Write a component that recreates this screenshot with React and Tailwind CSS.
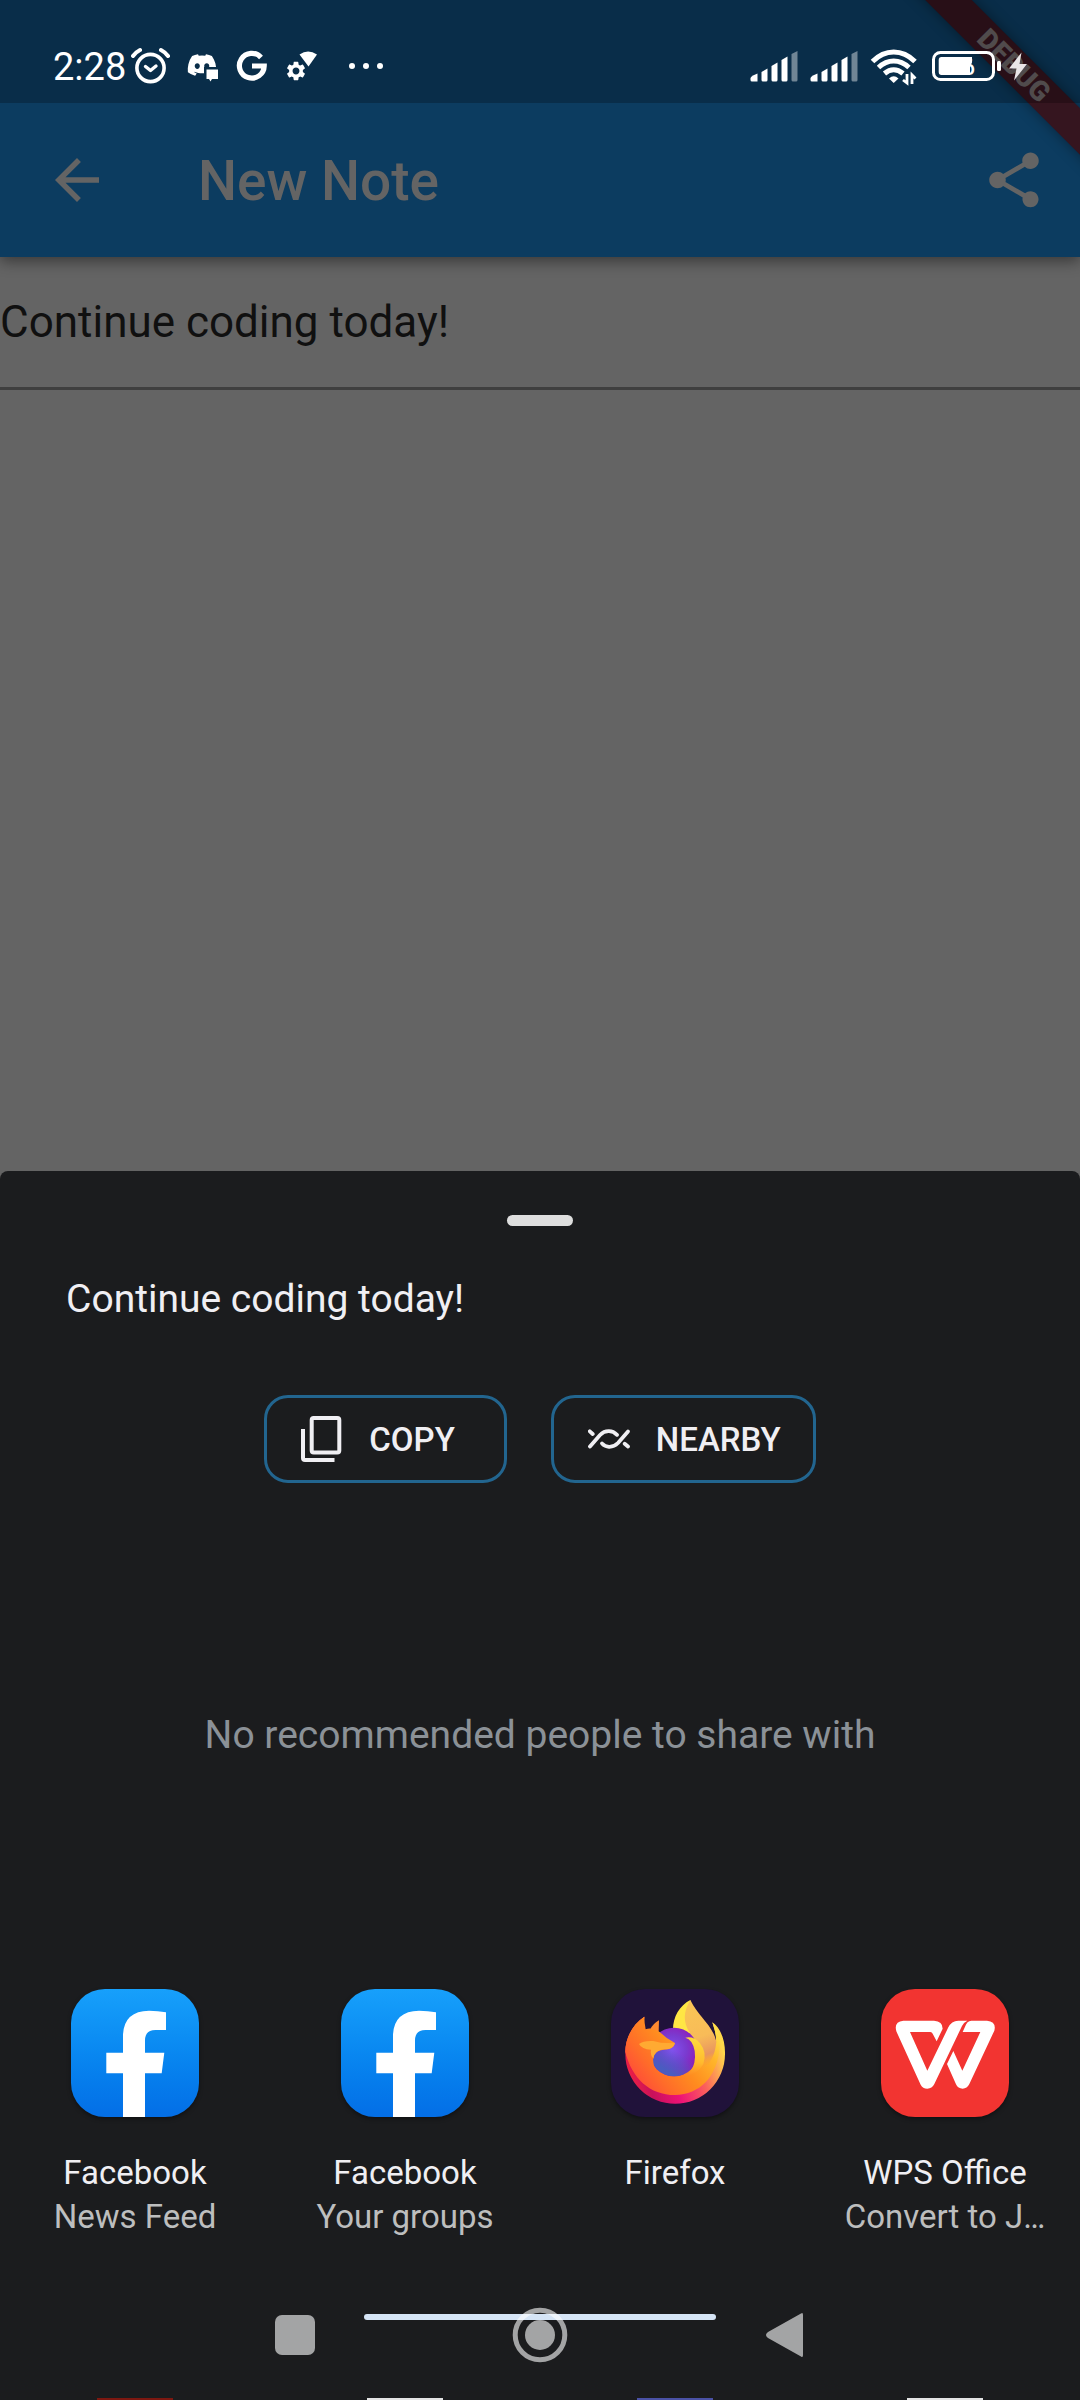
import React from "react";
import { MdArrowBack, MdShare, MdSettings } from "react-icons/md";
import { FaDiscord } from "react-icons/fa";

function AlarmIcon() {
  return (
    <svg className="h-10 w-10" viewBox="132 47 40 40" fill="none" stroke="#fff" strokeLinecap="round">
      <circle cx="152.500" cy="68" r="13.600" strokeWidth="3.600" />
      <path d="M135 56Q138 52 142 50M163 50Q167 52 170 56" strokeWidth="4" />
      <path d="M147.500 66.500L152.500 70.500L158 66" strokeWidth="3.400" strokeLinejoin="round" />
    </svg>
  );
}

function DiscordIcon() {
  return (
    <svg className="h-10 w-[34px]" viewBox="188 47 34 40" fill="#fff">
      <FaDiscord x="188.500" y="49.500" size="31" color="#fff" />
      <rect x="206" y="67" width="16" height="15" fill="#092e49" />
      <path d="M208.500 69.500H220V79H214L212.500 81.500L211 79H208.500Z" />
    </svg>
  );
}

function GoogleIcon() {
  return (
    <svg className="h-10 w-8" viewBox="238 47 32 40" fill="none" stroke="#fff" strokeWidth="5.200">
      <path d="M263 57.400A12.400 12.400 0 1 0 266.200 66H254" />
    </svg>
  );
}

function GearSignalIcon() {
  return (
    <svg className="h-10 w-[34px]" viewBox="286 47 34 40" fill="#fff">
      <MdSettings x="286.500" y="59.500" size="23" color="#fff" />
      <path d="M301.500 54.500Q310 48.500 319 54.500L310.500 66.500Z" />
    </svg>
  );
}

function MoreDots() {
  return (
    <svg className="h-10 w-9" viewBox="350 47 36 40" fill="#fff">
      <circle cx="354" cy="66" r="3" />
      <circle cx="368" cy="66" r="3" />
      <circle cx="382" cy="66" r="3" />
    </svg>
  );
}

function SignalIcon() {
  return (
    <svg className="h-10 w-12" viewBox="750 47 48 40" fill="#fff">
      <path d="M750.500 80V78Q751 76.500 753 75.500L757.500 73.500V81.500H752Q750.500 81.500 750.500 80Z" />
      <path d="M761.500 80V72L767.500 68.500V80Q767.500 81.500 766 81.500H763Q761.500 81.500 761.500 80Z" />
      <path d="M771.500 80V66L777.500 62.500V80Q777.500 81.500 776 81.500H773Q771.500 81.500 771.500 80Z" />
      <path d="M781.500 80V60L787.500 56.500V80Q787.500 81.500 786 81.500H783Q781.500 81.500 781.500 80Z" />
      <path d="M791.500 80V54L797.500 51V80Q797.500 81.500 796 81.500H793Q791.500 81.500 791.500 80Z" opacity="0.42" />
    </svg>
  );
}

function WifiIcon() {
  return (
    <svg className="h-10 w-12" viewBox="870 47 48 40" fill="none" stroke="#fff" strokeWidth="5">
      <path d="M872.500 61.500Q882 52 893.700 52T915 61.500" />
      <path d="M878.500 67.500Q885.500 61 893.700 61T909 67.500" />
      <path d="M884.500 73.500Q889 69.700 893.700 69.700T903 73.500" />
      <path d="M889 78.500Q893.700 74 898.500 78.500L893.700 83Z" fill="#fff" stroke="none" />
      <path d="M907 74V83L903 80M912 84V75L915.500 78.500" strokeWidth="2.800" />
    </svg>
  );
}

function BatteryIcon() {
  return (
    <svg className="h-10 w-[70px]" viewBox="932 47 70 40" fill="#fff">
      <rect x="933.500" y="52.500" width="60" height="27" rx="7" fill="none" stroke="#fff" strokeWidth="3" />
      <text x="950" y="75" fontFamily="Roboto, sans-serif" fontSize="22" fontWeight="500">56</text>
      <path d="M941.500 57H972V62.500L970 67V75H941.500Q938.700 75 938.700 72V60Q938.700 57 941.500 57Z" />
      <rect x="997" y="61" width="4" height="10" rx="1.500" />
    </svg>
  );
}

function BoltIcon() {
  return (
    <svg className="h-10 w-5" viewBox="1008 47 20 40" fill="#e9e6e7">
      <path d="M1021.500 52.500L1009 68.500H1016.500L1014 80.500L1027 64H1019.500Z" />
    </svg>
  );
}

function CopyIcon() {
  return (
    <svg className="h-12 w-11" viewBox="302 1415 44 48" fill="none" stroke="#f0eff3" strokeWidth="4">
      <rect x="312.700" y="1418" width="27.600" height="34.500" rx="2" />
      <path d="M304 1429V1458Q304 1460 306 1460H335.500" />
    </svg>
  );
}

function NearbyIcon() {
  return (
    <svg className="h-12 w-11" viewBox="588 1415 44 48" fill="none" stroke="#f0eff3" strokeWidth="3.800" strokeLinecap="round">
      <path d="M590 1446.500L600 1435Q604 1431 609 1431.200Q613.500 1431.300 617 1434.800" />
      <path d="M602 1443.500Q605 1446.700 609 1446.800Q614 1447 618 1443L628 1431.500" />
      <path d="M589.800 1431.300L592.700 1434M624.700 1443.800L628 1446.500" />
    </svg>
  );
}

function FacebookLogo() {
  return (
    <svg className="size-32" viewBox="0 0 128 128" fill="#fff">
      <path d="M95 23.300V41H84.500Q74 41 74 51.500V63.700H93.300L90.700 84.300H74V128H52V84.300H35.300V63.700H52V46Q53 22 78 21.700Q87 21.700 95 23.300Z" />
    </svg>
  );
}

function FirefoxLogo() {
  return (
    <svg className="size-32" viewBox="63 27 384 384">
      <defs>
        <linearGradient id="ff-body" x1="385" y1="150" x2="150" y2="340" gradientUnits="userSpaceOnUse">
          <stop offset="0" stopColor="#ffe34a" />
          <stop offset="0.22" stopColor="#ffb52a" />
          <stop offset="0.5" stopColor="#ff8c1f" />
          <stop offset="0.75" stopColor="#ff6c29" />
          <stop offset="1" stopColor="#ff463c" />
        </linearGradient>
        <linearGradient id="ff-pink" x1="400" y1="210" x2="110" y2="300" gradientUnits="userSpaceOnUse">
          <stop offset="0" stopColor="#ffd84a" />
          <stop offset="0.28" stopColor="#fb5f5c" />
          <stop offset="0.55" stopColor="#ee1277" />
          <stop offset="0.8" stopColor="#c8115a" />
          <stop offset="1" stopColor="#f4233f" />
        </linearGradient>
        <radialGradient id="ff-globe" cx="245" cy="210" r="80" gradientUnits="userSpaceOnUse">
          <stop offset="0" stopColor="#8452f0" />
          <stop offset="0.55" stopColor="#7a3bd0" />
          <stop offset="1" stopColor="#8f1cb8" />
        </radialGradient>
        <linearGradient id="ff-globe-low" x1="255" y1="210" x2="220" y2="265" gradientUnits="userSpaceOnUse">
          <stop offset="0" stopColor="#4e5cc9" stopOpacity="0" />
          <stop offset="1" stopColor="#4a5cc0" />
        </linearGradient>
        <linearGradient id="ff-tail" x1="300" y1="80" x2="360" y2="260" gradientUnits="userSpaceOnUse">
          <stop offset="0" stopColor="#f9c455" />
          <stop offset="0.5" stopColor="#f8bb58" />
          <stop offset="0.8" stopColor="#e8955f" />
          <stop offset="1" stopColor="#ffa12a" stopOpacity="0" />
        </linearGradient>
        <linearGradient id="ff-inner" x1="320" y1="180" x2="310" y2="288" gradientUnits="userSpaceOnUse">
          <stop offset="0" stopColor="#ffd83c" />
          <stop offset="0.6" stopColor="#ffbb2e" />
          <stop offset="1" stopColor="#ff8a22" />
        </linearGradient>
      </defs>
      <path d="M301 60C268 77 248 112 249 152L330 240L320 160Q300 110 301 60Z" fill="#ffe644" />
      <path d="M163 110C125 135 106 178 106 222A149.500 149.500 0 0 0 405 222C406 185 394 145 367 127C374 150 380 165 378 190C374 230 355 252 335 262L250 240L150 230Z" fill="url(#ff-pink)" />
      <path d="M163 110C125 135 106 178 106 215C125 295 180 345 255 345C330 343 383 290 389 200C390 165 380 142 367 127C373 148 380 165 378 190L330 200L250 240L150 230Z" fill="url(#ff-body)" />
      <path d="M301 60C280 95 278 125 300 160C328 190 340 220 335 274C362 255 376 220 379 185C368 135 325 110 301 60Z" fill="url(#ff-tail)" />
      <circle cx="252" cy="216" r="73" fill="url(#ff-globe)" />
      <circle cx="252" cy="216" r="73" fill="url(#ff-globe-low)" />
      <path d="M163 110C125 135 106 178 106 215C120 260 150 300 204 288Q190 262 189 236L210 158Q185 140 167 148Q163 128 163 110Z" fill="url(#ff-body)" />
      <path d="M286 173Q312 168 330 190Q352 218 340 252Q325 282 285 289Q307 274 313 248Q320 210 304 186Q297 176 286 173Z" fill="url(#ff-inner)" />
      <path d="M207 121Q190 130 180 149L206 156Z" fill="#ff8a30" />
      <path d="M150 155Q185 140 209 156Q228 175 255 189Q250 209 220 209Q190 212 190 237L150 230Z" fill="url(#ff-body)" />
      <path d="M147 192Q160 181 190 183L213 188L255 190Q250 209 224 208Q195 210 190 235Q180 225 183 209Q155 208 147 192Z" fill="#ffaa32" />
    </svg>
  );
}

function WpsLogo() {
  return (
    <svg className="size-32" viewBox="903 57 384 384" fill="#fff">
      <path d="M970 152H1062Q1088 153 1088 176L1070 214L1058 191Q1056 186 1051 186H990L1042 302L1105 172Q1114 153 1135 152H1162Q1151 157 1146 168L1063 342Q1056 356 1042 356Q1028 356 1022 344L949 184Q941 155 970 152Z" />
      <path d="M1174 152H1221Q1250 155 1243 182L1168 342Q1161 356 1148 356Q1134 356 1128 343L1101 282L1120 243L1147 302L1201 186H1148L1155 170Q1161 152 1174 152Z" />
    </svg>
  );
}

const apps = [
  { title: "Facebook", detail: "News Feed", tile: "bg-linear-to-b from-[#17a0fb] to-[#046ee6]", Logo: FacebookLogo },
  { title: "Facebook", detail: "Your groups", tile: "bg-linear-to-b from-[#17a0fb] to-[#046ee6]", Logo: FacebookLogo },
  { title: "Firefox", detail: "", tile: "bg-[#20123a]", Logo: FirefoxLogo },
  { title: "WPS Office", detail: "Convert to J…", tile: "bg-[#f23431]", Logo: WpsLogo },
];

const nextTiles = ["bg-[#7d1710]", "bg-[#e4e4e4]", "bg-[#4a51a5]", "bg-[#e4e4e4]"];

function StatusBar() {
  return (
    <div className="relative z-20 flex h-[103px] items-center justify-between bg-black/24 pt-[31px] pr-[52px] pl-[53px]">
      <div className="flex items-center">
        <time className="mr-1 text-[38px] leading-none text-white">2:28</time>
        <div className="flex items-center gap-4">
          <AlarmIcon />
          <DiscordIcon />
          <GoogleIcon />
          <GearSignalIcon />
          <span className="ml-3.5"><MoreDots /></span>
        </div>
      </div>
      <div className="flex items-center gap-3">
        <SignalIcon />
        <SignalIcon />
        <WifiIcon />
        <div className="ml-0.5 flex items-center gap-1.5">
          <BatteryIcon />
          <BoltIcon />
        </div>
      </div>
    </div>
  );
}

function DebugRibbon() {
  return (
    <div className="pointer-events-none absolute top-0 right-0 z-10 size-[180px] overflow-hidden">
      <div className="absolute top-[49px] -right-[84px] flex h-[33px] w-[300px] rotate-45 items-center justify-center bg-[#35151f] text-[28px] leading-none font-black text-[#6a6365] shadow-[0_0_14px_rgba(0,0,0,0.4)]">
        DEBUG
      </div>
    </div>
  );
}

function AppTarget({ title, detail, tile, Logo }) {
  return (
    <button type="button" className="flex min-w-0 flex-col items-center px-2">
      <span className={"block size-32 overflow-hidden rounded-[34px] shadow-[0_2px_4px_rgba(0,0,0,0.4)] " + tile}>
        <Logo />
      </span>
      <span className="mt-[34px] text-[33px] leading-[44px] text-[#f0eff3]">{title}</span>
      <span className="h-11 max-w-full truncate text-[33px] leading-[44px] text-[#bdbebe]">{detail}</span>
    </button>
  );
}

function ShareSheet() {
  return (
    <section aria-label="Share" className="overflow-hidden rounded-t-lg bg-[#1b1c1e]">
      <div className="mx-auto mt-11 h-[11px] w-[66px] rounded-md bg-[#dedede]" />
      <p className="mt-[50px] ml-[66px] text-[39px] leading-[46px] text-[#f0eff3]">Continue coding today!</p>
      <div className="mt-[73px] flex justify-center gap-11 text-[33px] font-medium text-[#f0eff3]">
        <button type="button" className="flex h-[88px] items-center gap-6 rounded-3xl border-3 border-[#22658f] pr-[49px] pl-[34px]">
          <CopyIcon />
          <span className="pt-0.5">COPY</span>
        </button>
        <button type="button" className="flex h-[88px] items-center gap-6 rounded-3xl border-3 border-[#22658f] pr-8 pl-[34px]">
          <NearbyIcon />
          <span className="pt-0.5">NEARBY</span>
        </button>
      </div>
      <p className="mt-[229px] text-center text-[39px] leading-[46px] text-[#8b9197]">No recommended people to share with</p>
      <div className="mt-[231px] grid grid-cols-4">
        {apps.map((app, i) => <AppTarget key={i} {...app} />)}
      </div>
      <div className="mx-auto mt-[75px] h-1.5 w-[352px] rounded-full bg-[#d5e4f5]" />
      <div className="mt-[78px] grid grid-cols-4 justify-items-center">
        {nextTiles.map((color, i) => <span key={i} className={"h-0.5 w-[76px] " + color} />)}
      </div>
    </section>
  );
}

function NavBar() {
  return (
    <nav aria-label="System" className="absolute inset-x-0 bottom-0 flex h-[130px] items-center justify-center">
      <div className="flex gap-[189px]">
        <button type="button" aria-label="Recent apps" className="size-[56px]">
          <svg viewBox="0 0 56 56" fill="#fff" fillOpacity="0.6"><rect x="8" y="8" width="40" height="40" rx="7" /></svg>
        </button>
        <button type="button" aria-label="Home" className="size-[56px]">
          <svg viewBox="0 0 56 56" fill="none" stroke="#fff" strokeOpacity="0.6">
            <circle cx="28" cy="28" r="24.800" strokeWidth="5" />
            <circle cx="28" cy="28" r="15" fill="#fff" fillOpacity="0.6" stroke="none" />
          </svg>
        </button>
        <button type="button" aria-label="Back" className="size-[56px]">
          <svg viewBox="0 0 56 56" fill="#fff" fillOpacity="0.6"><path d="M44 6.500Q46 5 46 8V48Q46 51 44 49.500L11 31Q7 28 11 25Z" /></svg>
        </button>
      </div>
    </nav>
  );
}

export default function App() {
  return (
    <div className="relative flex min-h-screen flex-col overflow-hidden bg-[#646464] font-[Roboto,sans-serif]">
      <div className="relative z-10 bg-[#0c3c60] shadow-[0_4px_14px_rgba(0,0,0,0.45)]">
        <StatusBar />
        <header className="flex h-[154px] items-center justify-between px-[33px]">
          <div className="flex items-center">
            <button type="button" aria-label="Back" className="p-[11px] text-[#646464]"><MdArrowBack size={66} /></button>
            <h1 className="ml-[77px] pt-0.5 text-[55px] leading-none font-medium text-[#646464]">New Note</h1>
          </div>
          <button type="button" aria-label="Share" className="text-[#646464]"><MdShare size={66} /></button>
        </header>
        <DebugRibbon />
      </div>
      <main className="flex-1">
        <input
          aria-label="Note"
          defaultValue="Continue coding today!"
          className="block h-[133px] w-full border-b-3 border-[#3f3f3f] bg-transparent text-[44px] text-[#101010] outline-none"
        />
      </main>
      <ShareSheet />
      <NavBar />
    </div>
  );
}
